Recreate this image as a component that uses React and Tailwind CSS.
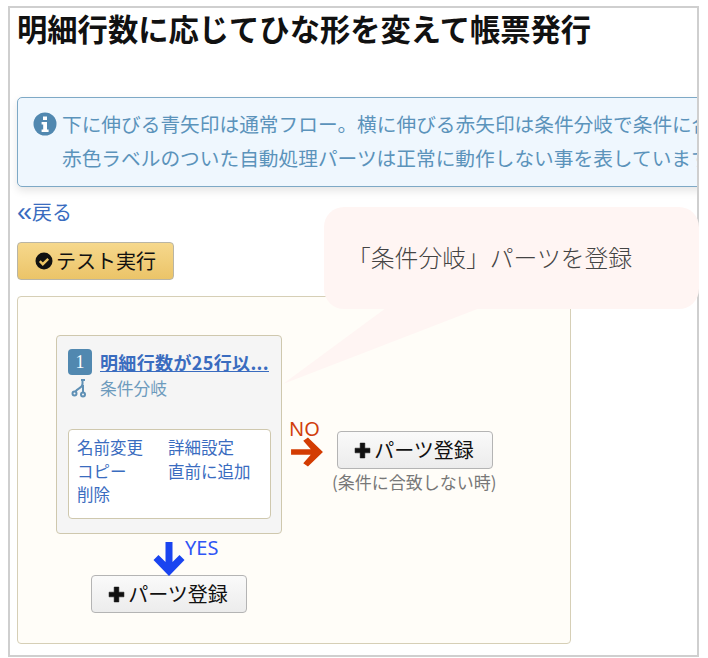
const sans = "font-['Noto_Sans_CJK_JP','Liberation_Sans',sans-serif]";

function Plus() {
  return (
    <svg width="17" height="17" viewBox="0 0 16 16" className="shrink-0">
      <path d="M5.8 1h4.4v4.8H15v4.4h-4.8V15H5.800v-4.800H1V5.800h4.800z" fill="#111" stroke="#111" strokeWidth="0.5" strokeLinejoin="round" />
    </svg>
  );
}

function AddButton({ className = "" }) {
  return (
    <button className={`flex h-[38px] w-[156px] items-center justify-center gap-[3px] rounded-[4px] border border-[#b4b4b4] bg-gradient-to-b from-[#fafafa] to-[#ececec] pr-[2px] text-[20px] leading-none text-[#111] ${className}`}>
      <Plus />
      <span>パーツ登録</span>
    </button>
  );
}

export default function App() {
  return (
    <div className={`relative h-[658px] w-[708px] overflow-hidden bg-white ${sans}`}>
      <div className="ml-2 mt-[6px] h-[651px] w-[691px] overflow-hidden border-2 border-[#cfcfcf] bg-white pl-[7px]">
        <h1 className="whitespace-nowrap text-[30.3px] font-bold leading-[40px] text-[#111]">
          明細行数に応じてひな形を変えて帳票発行
        </h1>
        <div className="mt-[49px] h-[90px] w-[760px] rounded-[5px] border border-[#7ea9c6] bg-[#eff7fe] pl-[15px] pt-[9px] text-[19.7px] leading-[34px] text-[#5b93bb] shadow-[0_4px_8px_rgba(0,0,0,0.1)]">
          <div className="flex items-center whitespace-nowrap">
            <svg width="24" height="24" viewBox="0 0 24 24" className="mr-[5px] shrink-0">
              <circle cx="12" cy="12" r="11.5" fill="#5188b0" />
              <path d="M10 4.500h4v3.500h-4zM8.600 10h5.400v7.500h1.600v2.600H8.600v-2.600h1.600v-5H8.600z" fill="#fff" />
            </svg>
            下に伸びる青矢印は通常フロー。横に伸びる赤矢印は条件分岐で条件に合致しない時
          </div>
          <div className="ml-[29px] whitespace-nowrap">赤色ラベルのついた自動処理パーツは正常に動作しない事を表しています。</div>
        </div>
        <a className="mt-[10px] flex h-[30px] items-center text-[20px] leading-[30px] text-[#3a6cbf]">
          <span className="font-['Liberation_Sans',sans-serif] text-[27px] leading-none">«</span>
          <span>戻る</span>
        </a>
        <button className="mt-[15px] flex h-[38px] w-[157px] items-center justify-center gap-[3px] rounded-[4px] border border-[#b9b5a5] bg-gradient-to-b from-[#f6d88c] to-[#ebc468] text-[20px] leading-none text-[#111]">
          <svg width="18" height="18" viewBox="0 0 18 18" className="shrink-0">
            <circle cx="9" cy="9" r="8.500" fill="#111" />
            <path d="M4.800 9.200l3 3 5.400-5.400" fill="none" stroke="#edc564" strokeWidth="2.400" />
          </svg>
          テスト実行
        </button>
        <div className="mt-[16px] h-[348px] w-[554px] rounded-[4px] border border-[#d6cfb6] bg-[#fffdf8] pl-[38px] pt-[38px]">
          <div className="flex">
            <div className="h-[199px] w-[226px] shrink-0 rounded-[4px] border border-[#cfc8ae] bg-[#f5f5f5] px-[11px] pt-[13px]">
              <div className="flex items-center gap-2">
                <span className="flex h-[26px] w-[24px] items-center justify-center rounded-[4px] bg-[#5188b0] font-['Liberation_Serif',serif] text-[18px] leading-none text-white">1</span>
                <a className="whitespace-nowrap text-[18px] font-bold leading-[26px] tracking-[0.35px] text-[#3a6cbf] underline">明細行数が25行以...</a>
              </div>
              <div className="mt-px flex items-center gap-[12px] pl-[3px] text-[16.8px] leading-[24px] text-[#6d9bbd]">
                <svg width="17" height="20" viewBox="0 0 17 20" fill="none" stroke="#5f90b5" strokeWidth="2" className="shrink-0">
                  <circle cx="3.500" cy="15.500" r="2" />
                  <circle cx="12" cy="16.500" r="2" />
                  <path d="M4.500 13.500C6.500 10 11.500 10 11.500 6V2M10 2h4M12 14.500V7" />
                </svg>
                <span>条件分岐</span>
              </div>
              <div className="mt-[29px] grid h-[90px] w-[203px] grid-cols-[91px_1fr] content-start rounded-[4px] border border-[#cfc8ae] bg-white pl-[8px] pt-[6px] text-[16.5px] leading-[23.5px] text-[#3a6cbf]">
                <a>名前変更</a>
                <a>詳細設定</a>
                <a>コピー</a>
                <a>直前に追加</a>
                <a>削除</a>
              </div>
            </div>
            <div className="relative ml-[7px] w-[216px] pt-[96px]">
              <span className="absolute left-0 top-[82px] font-['Noto_Sans',sans-serif] text-[20px] leading-[24px] text-[#d13f0e]">NO</span>
              <div className="flex items-center gap-3">
                <svg width="36" height="30" viewBox="0 0 36 32" className="mt-[3px] shrink-0">
                  <path d="M1 13h21l-8-9 5-3.500L35 16 19 31.500 14 28l8-9H1z" fill="#d33c02" />
                </svg>
                <AddButton />
              </div>
              <p className="ml-[43px] mt-px whitespace-nowrap text-[17px] leading-[24px] text-[#777]">(条件に合致しない時)</p>
            </div>
          </div>
          <div className="relative h-[41px] w-[226px]">
            <svg width="32" height="36" viewBox="0 0 32 36" className="absolute left-[97px] top-[7px]">
              <path d="M12.500 1h7v20l7-7 5 5L16 35 .5 19l5-5 7 7z" fill="#1a44f0" />
            </svg>
            <span className="absolute left-[129px] top-[3px] font-['Noto_Sans',sans-serif] text-[20px] leading-[22px] text-[#2f55f5]">YES</span>
          </div>
          <AddButton className="ml-[35px]" />
        </div>
      </div>

      <div className="absolute left-[324px] top-[207px] flex h-[102px] w-[375px] items-center rounded-[20px] bg-[#fff5f3] pb-[2px] pl-[23px] text-[23.8px] font-light leading-none text-[#444]">
        「条件分岐」パーツを登録
      </div>
      <svg width="200" height="78" viewBox="0 0 200 78" className="absolute left-[283px] top-[308px]">
        <path d="M103 0L0 76 197 0z" fill="#fff5f3" />
      </svg>
    </div>
  );
}
